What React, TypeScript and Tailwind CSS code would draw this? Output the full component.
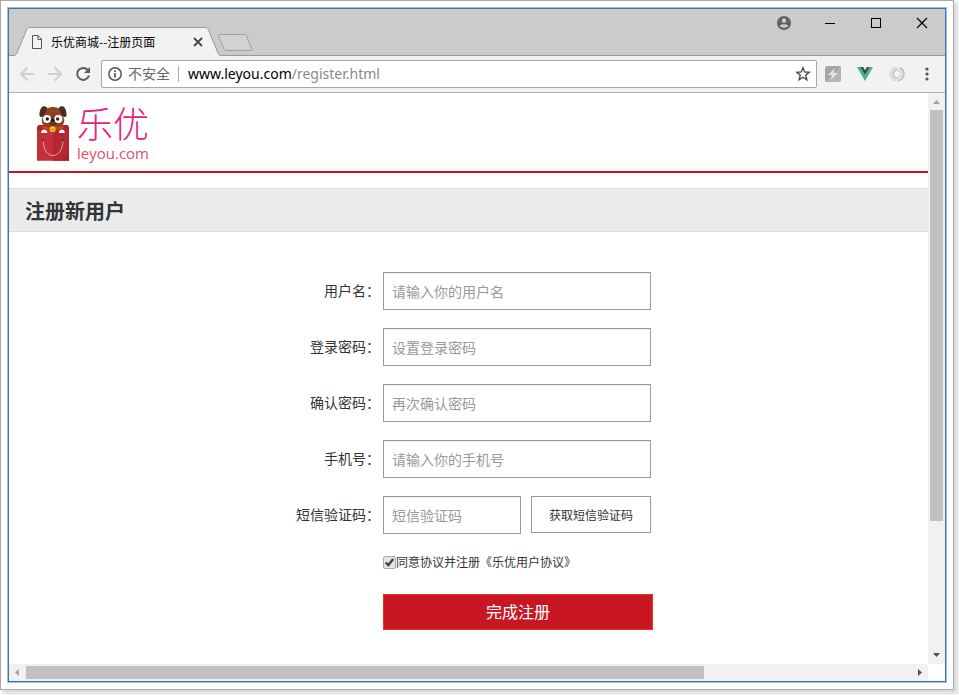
import type { ReactNode } from "react";

const UI_FONT = "font-['Noto_Sans','Noto_Sans_CJK_SC',sans-serif]";
const CJK_FONT = "font-['Noto_Sans_CJK_SC',sans-serif]";

function Tab() {
  return (
    <div className="relative z-10 ml-[6px] -mb-px flex h-[29px] w-[206px] items-center pr-4 pl-[17px]">
      <svg className="absolute inset-0 h-full w-full overflow-visible" viewBox="0 0 206 29" preserveAspectRatio="none">
        <path d="M-3 28.500 C0 28.500 1 28 2 26 L11.500 3 C12.500 1 13 .5 15 .5 H190 C192 .5 192.500 1 193.500 3 L203 26 C204 28 204.500 28.500 206 28.500 V29 H-3 Z" fill="#f2f2f2" />
        <path d="M-3 28.500 C0 28.500 1 28 2 26 L11.500 3 C12.500 1 13 .5 15 .5 H190 C192 .5 192.500 1 193.500 3 L203 26 C204 28 204.500 28.500 206 28.500" fill="none" stroke="#999" />
      </svg>
      <svg className="relative h-[14px] w-[10px] shrink-0" viewBox="0 0 10 14" fill="none" stroke="#555">
        <path d="M.5 .5 H6 L9.500 4 V13.500 H.5 Z M6 .5 V4.500 H9.500" />
      </svg>
      <span className={`relative ml-[9px] flex-1 text-[12px] leading-4 whitespace-nowrap text-black ${CJK_FONT}`}>乐优商城--注册页面</span>
      <button type="button" aria-label="关闭标签页" className="relative flex size-[14px] items-center justify-center">
        <svg className="size-[10px]" viewBox="0 0 10 10" stroke="#444" strokeWidth="1.800">
          <path d="M1 1 L9 9 M9 1 L1 9" />
        </svg>
      </button>
    </div>
  );
}

function TabStrip() {
  return (
    <div className="flex h-[47px] items-end border-b border-[#999] bg-[#cbcbcb]">
      <Tab />
      <button type="button" aria-label="新标签页" className="-ml-1 mb-[3px] h-[18px] w-9 shrink-0">
        <svg className="h-full w-full" viewBox="0 0 36 18" fill="#d2d2d2" stroke="#a0a0a0">
          <path d="M3 .5 H27 C28.500 .5 29 1 29.500 2 L34.500 14.500 C35 16 34.500 16.500 33.500 16.500 H9.500 C8 16.500 7.500 16 7 15 L1.500 2 C1 1 1.500 .5 3 .5 Z" />
        </svg>
      </button>
      <div className="ml-auto flex h-full items-start gap-8 pt-[7px] pr-4">
        <button type="button" aria-label="用户" className="size-[14px]">
          <svg viewBox="0 0 14 14">
            <circle cx="7" cy="7" r="7" fill="#5f5f5f" />
            <circle cx="7" cy="4.500" r="2.200" fill="#cbcbcb" />
            <path d="M2.700 10 C3.500 7.800 10.500 7.800 11.300 10 C10 12.300 4 12.300 2.700 10 Z" fill="#cbcbcb" />
          </svg>
        </button>
        <button type="button" aria-label="最小化" className="size-[14px]">
          <svg viewBox="0 0 14 14" stroke="#000" fill="none"><path d="M2 7.500 H12" /></svg>
        </button>
        <button type="button" aria-label="最大化" className="size-[14px]">
          <svg viewBox="0 0 14 14" stroke="#000" fill="none"><rect x="2.500" y="2.500" width="9" height="9" /></svg>
        </button>
        <button type="button" aria-label="关闭" className="size-[14px]">
          <svg viewBox="0 0 14 14" stroke="#000" fill="none" strokeWidth="1.200"><path d="M2 2 L12 12 M12 2 L2 12" /></svg>
        </button>
      </div>
    </div>
  );
}

function Toolbar() {
  return (
    <div className={`flex h-[37px] items-center border-b border-[#b1b1b1] bg-[#f2f2f2] pr-3 pl-[10px] ${UI_FONT}`}>
      <div className="flex items-center gap-3">
        <button type="button" aria-label="后退" className="size-4">
          <svg viewBox="0 0 16 16" fill="none" stroke="#cfd0d2" strokeWidth="2"><path d="M15 8 H2.500 M8.500 1.500 L2 8 L8.500 14.500" /></svg>
        </button>
        <button type="button" aria-label="前进" className="size-4">
          <svg viewBox="0 0 16 16" fill="none" stroke="#cfd0d2" strokeWidth="2"><path d="M1 8 H13.500 M7.500 1.500 L14 8 L7.500 14.500" /></svg>
        </button>
        <button type="button" aria-label="重新加载" className="size-4">
          <svg viewBox="0 0 16 16" fill="none" stroke="#5a5a5a" strokeWidth="2">
            <path d="M12.800 4 A6 6 0 1 0 14 9.500" />
            <path d="M15 1 V7 H9 Z" fill="#5a5a5a" stroke="none" />
          </svg>
        </button>
      </div>
      <div className="ml-[10px] flex h-7 flex-1 items-center rounded-[2px] border border-[#a8a8a8] bg-white pr-[5px] pl-[6px]">
        <svg className="size-[14px]" viewBox="0 0 14 14" fill="none" stroke="#555">
          <circle cx="7" cy="7" r="6.200" strokeWidth="1.500" />
          <path d="M7 6 V10.500 M7 3.300 V5" strokeWidth="1.700" />
        </svg>
        <span className="ml-[6px] text-[14px] leading-5 text-[#666]">不安全</span>
        <span className="ml-2 h-4 w-px bg-[#aaa]" />
        <div className="ml-[9px] flex-1 text-[14px] leading-5 text-[#888]">
          <span className="text-black">www.leyou.com</span>/register.html
        </div>
        <button type="button" aria-label="收藏" className="size-4">
          <svg viewBox="0 0 16 16" fill="none" stroke="#444" strokeWidth="1.300" strokeLinejoin="miter">
            <path d="M8 1.800 L9.700 6 L14.200 6.300 L10.700 9.200 L11.900 13.700 L8 11.200 L4.100 13.700 L5.300 9.200 L1.800 6.300 L6.300 6 Z" />
          </svg>
        </button>
      </div>
      <div className="ml-2 flex items-center gap-4">
        <svg className="size-4" viewBox="0 0 16 16">
          <rect width="16" height="16" rx="2.500" fill="#a5a5a5" />
          <path d="M0 16 L16 0 V13.500 Q16 16 13.500 16 Z" fill="#b5b5b5" />
          <path d="M10 2 L3 9 H7.500 L5.500 14 L13 7 H8.500 Z" fill="#e6e6e6" />
        </svg>
        <svg className="size-4" viewBox="0 0 16 16">
          <path d="M0 1 H3.300 L8 9 L12.700 1 H16 L8 15 Z" fill="#41b883" />
          <path d="M3.300 1 H6.200 L8 4.200 L9.800 1 H12.700 L8 9 Z" fill="#35495e" />
        </svg>
        <svg className="size-4" viewBox="0 0 16 16" fill="none">
          <path d="M8 1.500 C3.500 1.500 1.200 5 1.500 8.500 C1.800 11.500 4 14 7 14.300" stroke="#dadada" strokeWidth="2.200" />
          <path d="M9 3.500 C5.500 3.500 4 6 4.200 8.500 C4.500 11 6.500 12.300 9 12" stroke="#c6c6c6" strokeWidth="2" />
          <path d="M8 4 C11 4.300 12 6.300 11.800 8.500 C11.500 10.800 10 12 8 12.300" stroke="#dadada" strokeWidth="1.800" />
          <path d="M10.500 1.800 C13.500 3 15 5.500 14.600 8.500 C14.200 12 11.500 14.500 8.500 14.700" stroke="#c2c2c2" strokeWidth="2" />
        </svg>
        <button type="button" aria-label="菜单" className="flex h-4 w-3 items-center justify-center">
          <svg className="h-4 w-1" viewBox="0 0 4 16" fill="#555">
            <circle cx="2" cy="3" r="1.600" /><circle cx="2" cy="8" r="1.600" /><circle cx="2" cy="13" r="1.600" />
          </svg>
        </button>
      </div>
    </div>
  );
}

function Logo() {
  return (
    <a href="#" className="flex items-start gap-[7px]">
      <svg className="h-14 w-[33px] shrink-0" viewBox="0 0 99 168">
        <path d="M0 66 H96 V167 H0 Z" fill="#c4303a" />
        <path d="M48 66 H96 V140 L70 167 H48 Z" fill="#b4272f" />
        <path d="M96 140 V167 H70 Z" fill="#aa2129" />
        <path d="M0 66 L4 60 H92 L96 66 V76 H0 Z" fill="#a8262b" />
        <path d="M22 24 C26 0 70 0 74 24 L82 44 C82 60 70 66 66 74 H30 C26 66 14 60 14 44 Z" fill="#8a4423" />
        <path d="M24 4 C12 0 8 18 7 29 C8 38 18 38 22 31 C24 22 29 14 32 9 Z" fill="#4d2b22" />
        <path d="M72 4 C84 0 88 18 89 29 C88 38 78 38 74 31 C72 22 67 14 64 9 Z" fill="#4d2b22" />
        <path d="M48 34 C34 44 30 54 38 61 H58 C66 54 62 44 48 34 Z" fill="#6b3320" />
        <circle cx="30" cy="42" r="12" fill="#fff" />
        <circle cx="64" cy="42" r="12" fill="#fff" />
        <circle cx="31" cy="42" r="5" fill="#222" />
        <circle cx="62" cy="42" r="5" fill="#222" />
        <ellipse cx="47" cy="46" rx="6" ry="4" fill="#221817" />
        <path d="M42 57 H52 L47 63 Z" fill="#5a2418" />
        <path d="M17 62 Q47 74 79 62 V70 Q47 80 17 70 Z" fill="#e5391c" />
        <circle cx="47" cy="73" r="9" fill="#f6c51d" />
        <path d="M39 73 H55 M47 75 V81" stroke="#a97b10" strokeWidth="2" />
        <path d="M13 84 C12 70 31 70 31 84 Z M66 84 C66 70 83 70 83 84 Z" fill="#fff" />
        <path d="M19 109 C20 166 75 166 78 109" fill="none" stroke="#e2a0a4" strokeWidth="3" />
        <circle cx="19" cy="106" r="3" fill="#7d1b22" />
        <circle cx="78" cy="106" r="3" fill="#7d1b22" />
      </svg>
      <span className="flex flex-col pt-[2px]">
        <span className="font-['Liberation_Sans','Noto_Sans_CJK_SC',sans-serif] text-[36px] leading-[38px] font-light text-[#e5237e]">乐优</span>
        <span className="font-['Open_Sans',sans-serif] text-[15px] leading-4 text-[#e0506a]">leyou.com</span>
      </span>
    </a>
  );
}

function Field({ id, label, children }: { id: string; label: string; children: ReactNode }) {
  return (
    <div className="flex items-center gap-[3px]">
      <label htmlFor={id} className="w-[84px] shrink-0 pb-[2px] text-right text-[14px] leading-5 whitespace-nowrap">{label}</label>
      <div className="flex w-[270px] items-start gap-[10px]">{children}</div>
    </div>
  );
}

const INPUT =
  "h-[38px] border border-[#999] bg-white px-2 text-[14px] leading-5 shadow-[inset_0_1px_1px_rgba(0,0,0,0.07)] outline-none placeholder:text-[#999]";

const FIELDS = [
  { id: "username", label: "用户名：", placeholder: "请输入你的用户名", type: "text" },
  { id: "password", label: "登录密码：", placeholder: "设置登录密码", type: "password" },
  { id: "confirm", label: "确认密码：", placeholder: "再次确认密码", type: "password" },
  { id: "phone", label: "手机号：", placeholder: "请输入你的手机号", type: "text" },
];

function RegisterForm() {
  return (
    <form className="flex flex-col items-center gap-[18px] pt-10 pl-3" onSubmit={(e) => e.preventDefault()}>
      {FIELDS.map((f) => (
        <Field key={f.id} id={f.id} label={f.label}>
          <input id={f.id} type={f.type} placeholder={f.placeholder} className={`w-[268px] ${INPUT}`} />
        </Field>
      ))}
      <Field id="code" label="短信验证码：">
        <input id="code" type="text" placeholder="短信验证码" className={`w-[138px] ${INPUT}`} />
        <button type="button" className="h-[37px] w-[120px] border border-[#999] bg-white text-[12px] leading-4">获取短信验证码</button>
      </Field>
      <div className="flex flex-col gap-[22px] pl-[87px]">
        <div className="flex h-5 w-[270px] items-center">
          <span className="relative size-[13px]">
            <input id="agree" type="checkbox" defaultChecked className="peer block size-[13px] appearance-none rounded-[2px] border border-[#aaa] bg-[#e4e4e4]" />
            <svg className="pointer-events-none absolute inset-0 hidden size-[13px] peer-checked:block" viewBox="0 0 13 13" fill="none" stroke="#444" strokeWidth="2.400">
              <path d="M2.800 6.500 L5.300 9.200 L10.200 3" />
            </svg>
          </span>
          <label htmlFor="agree" className="text-[12px] leading-4 whitespace-nowrap">同意协议并注册《乐优用户协议》</label>
        </div>
        <button type="submit" className="h-9 w-[270px] border border-[#e8351f] bg-[#c81623] pb-[2px] text-[16px] leading-6 text-white">完成注册</button>
      </div>
    </form>
  );
}

function Arrow({ d, color }: { d: string; color: string }) {
  return (
    <svg className="size-[17px] shrink-0" viewBox="0 0 17 17" fill={color}>
      <path d={d} />
    </svg>
  );
}

export default function App() {
  return (
    <div className="h-screen overflow-hidden bg-white pr-[5px] pb-[5px]">
      <div className="h-full border border-[#a9a9a9] bg-white p-[6px] shadow-[3px_3px_4px_1px_rgba(0,0,0,0.15)]">
        <div className="h-full border border-[#bdb5ae]">
          <div className="flex h-full flex-col border border-[#1c7fd1]">
            <TabStrip />
            <Toolbar />
            <div className="flex min-h-0 flex-1">
              <main className={`min-w-0 flex-1 overflow-hidden text-[#333] ${CJK_FONT}`}>
                <header className="flex h-20 items-start border-b-2 border-[#c81623] pt-3 pl-7">
                  <Logo />
                </header>
                <h1 className="mt-[15px] flex h-11 items-center border-y border-[#ddd] bg-[#ebebeb] pt-[2px] pl-4 text-[20px] leading-7 font-bold">注册新用户</h1>
                <RegisterForm />
              </main>
              <div className="flex w-[17px] flex-col bg-[#f1f1f1]">
                <Arrow d="M5 11 L8.500 7 L12 11 Z" color="#a3a3a3" />
                <div className="min-h-0 flex-1 px-[2px]">
                  <div className="h-[76.5%] bg-[#c1c1c1]" />
                </div>
                <Arrow d="M5 6 L8.500 10 L12 6 Z" color="#505050" />
              </div>
            </div>
            <div className="flex h-[17px]">
              <div className="flex flex-1 bg-[#f1f1f1]">
                <Arrow d="M10 5 L6 8.500 L10 12 Z" color="#a3a3a3" />
                <div className="flex-1 py-[2px]">
                  <div className="h-full w-[76.6%] bg-[#c1c1c1]" />
                </div>
                <Arrow d="M7 5 L11 8.500 L7 12 Z" color="#505050" />
              </div>
              <div className="w-[17px] bg-white" />
            </div>
          </div>
        </div>
      </div>
    </div>
  );
}
